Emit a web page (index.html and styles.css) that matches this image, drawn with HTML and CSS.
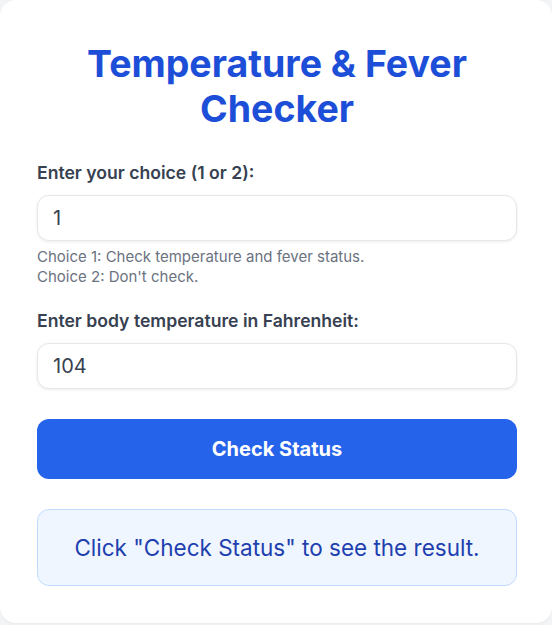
FILE: index.html
```html
<!DOCTYPE html>
<html lang="en">
<head>
<meta charset="utf-8">
<title>Temperature &amp; Fever Checker</title>
<link rel="stylesheet" href="styles.css">
</head>
<body>
<main class="card">
  <h1 class="title">Temperature &amp; Fever Checker</h1>
  <div class="field">
    <label class="label" for="choice">Enter your choice (1 or 2):</label>
    <input class="input" id="choice" type="text" value="1">
    <p class="help">Choice 1: Check temperature and fever status.<br>Choice 2: Don't check.</p>
  </div>
  <div class="field field-last">
    <label class="label" for="temp">Enter body temperature in Fahrenheit:</label>
    <input class="input" id="temp" type="text" value="104">
  </div>
  <button class="button" type="button">Check Status</button>
  <div class="result">Click "Check Status" to see the result.</div>
</main>
</body>
</html>
```
FILE: styles.css
```css
* { box-sizing: border-box; }
html, body { margin: 0; padding: 0; }
body {
  background: #f3f4f6;
  font-family: Inter, "Noto Sans", sans-serif;
  width: 552px;
  height: 625px;
  overflow: hidden;
}
.card {
  background: #ffffff;
  border-radius: 16px;
  padding: 41px 35px 37px 37px;
  display: flex;
  flex-direction: column;
  box-shadow: 0 1px 3px rgba(0,0,0,0.05);
}
.title {
  margin: 0 0 30px;
  font-size: 37.5px;
  line-height: 45px;
  font-weight: 700;
  color: #1d4ed8;
  text-align: center;
}
.field {
  display: flex;
  flex-direction: column;
  margin-bottom: 22px;
}
.field-last { margin-bottom: 30px; }
.label {
  font-size: 17.6px;
  line-height: 24px;
  font-weight: 600;
  color: #374151;
  margin-bottom: 10px;
}
.input {
  height: 46px;
  border: 1px solid #e5e7eb;
  border-radius: 12px;
  padding: 0 15px;
  font-family: inherit;
  font-size: 20px;
  color: #374151;
  background: #fff;
  box-shadow: 0 1px 3px rgba(0,0,0,0.08);
  outline: none;
}
.help {
  margin: 6px 0 0;
  font-size: 15px;
  line-height: 20px;
  color: #6b7280;
}
.button {
  height: 60px;
  border: none;
  border-radius: 12px;
  background: #2563eb;
  color: #ffffff;
  font-family: inherit;
  font-size: 20px;
  font-weight: 700;
  margin-bottom: 30px;
}
.result {
  height: 77px;
  display: flex;
  align-items: center;
  justify-content: center;
  background: #eff6ff;
  border: 1px solid #bfdbfe;
  border-radius: 12px;
  color: #1e40af;
  font-size: 22.5px;
}
```
